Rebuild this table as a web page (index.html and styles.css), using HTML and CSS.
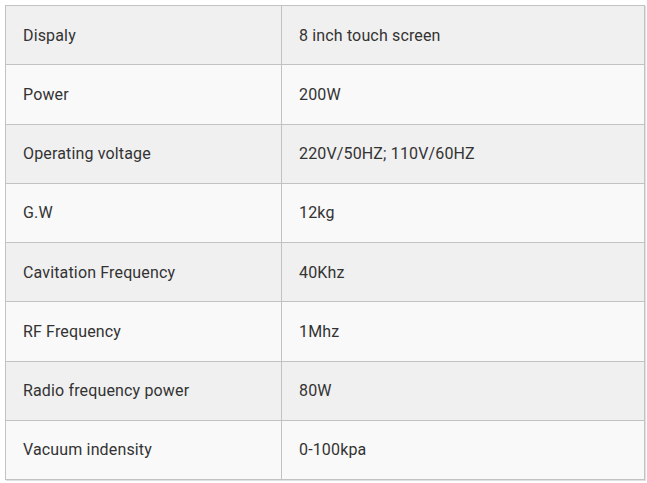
FILE: index.html
```html
<!DOCTYPE html>
<html>
<head>
<meta charset="utf-8">
<link rel="stylesheet" href="styles.css">
</head>
<body>
<table class="spec">
  <tbody>
    <tr><td class="k">Dispaly</td><td>8 inch touch screen</td></tr>
    <tr><td class="k">Power</td><td>200W</td></tr>
    <tr><td class="k">Operating voltage</td><td>220V/50HZ; 110V/60HZ</td></tr>
    <tr><td class="k">G.W</td><td>12kg</td></tr>
    <tr><td class="k">Cavitation Frequency</td><td>40Khz</td></tr>
    <tr><td class="k">RF Frequency</td><td>1Mhz</td></tr>
    <tr><td class="k">Radio frequency power</td><td>80W</td></tr>
    <tr><td class="k">Vacuum indensity</td><td>0-100kpa</td></tr>
  </tbody>
</table>
</body>
</html>
```

FILE: styles.css
```css
html, body {
  margin: 0;
  background: #ffffff;
}
body {
  padding: 5px;
  font-family: Roboto, "Liberation Sans", sans-serif;
  font-size: 16px;
  letter-spacing: 0.15px;
  color: #333333;
}
.spec {
  border-collapse: collapse;
  width: 640px;
  border: 1px solid #c2c2c2;
  box-shadow: 1px 1px 0 #e0e0e0;
}
.spec td {
  border: 1px solid #c2c2c2;
  height: 59.25px;
  padding: 0 17px;
  vertical-align: middle;
  box-sizing: border-box;
}
.spec td.k {
  width: 276px;
}
.spec tr:nth-child(odd) td {
  background: #f0f0f0;
}
.spec tr:nth-child(even) td {
  background: #f9f9f9;
}
```
